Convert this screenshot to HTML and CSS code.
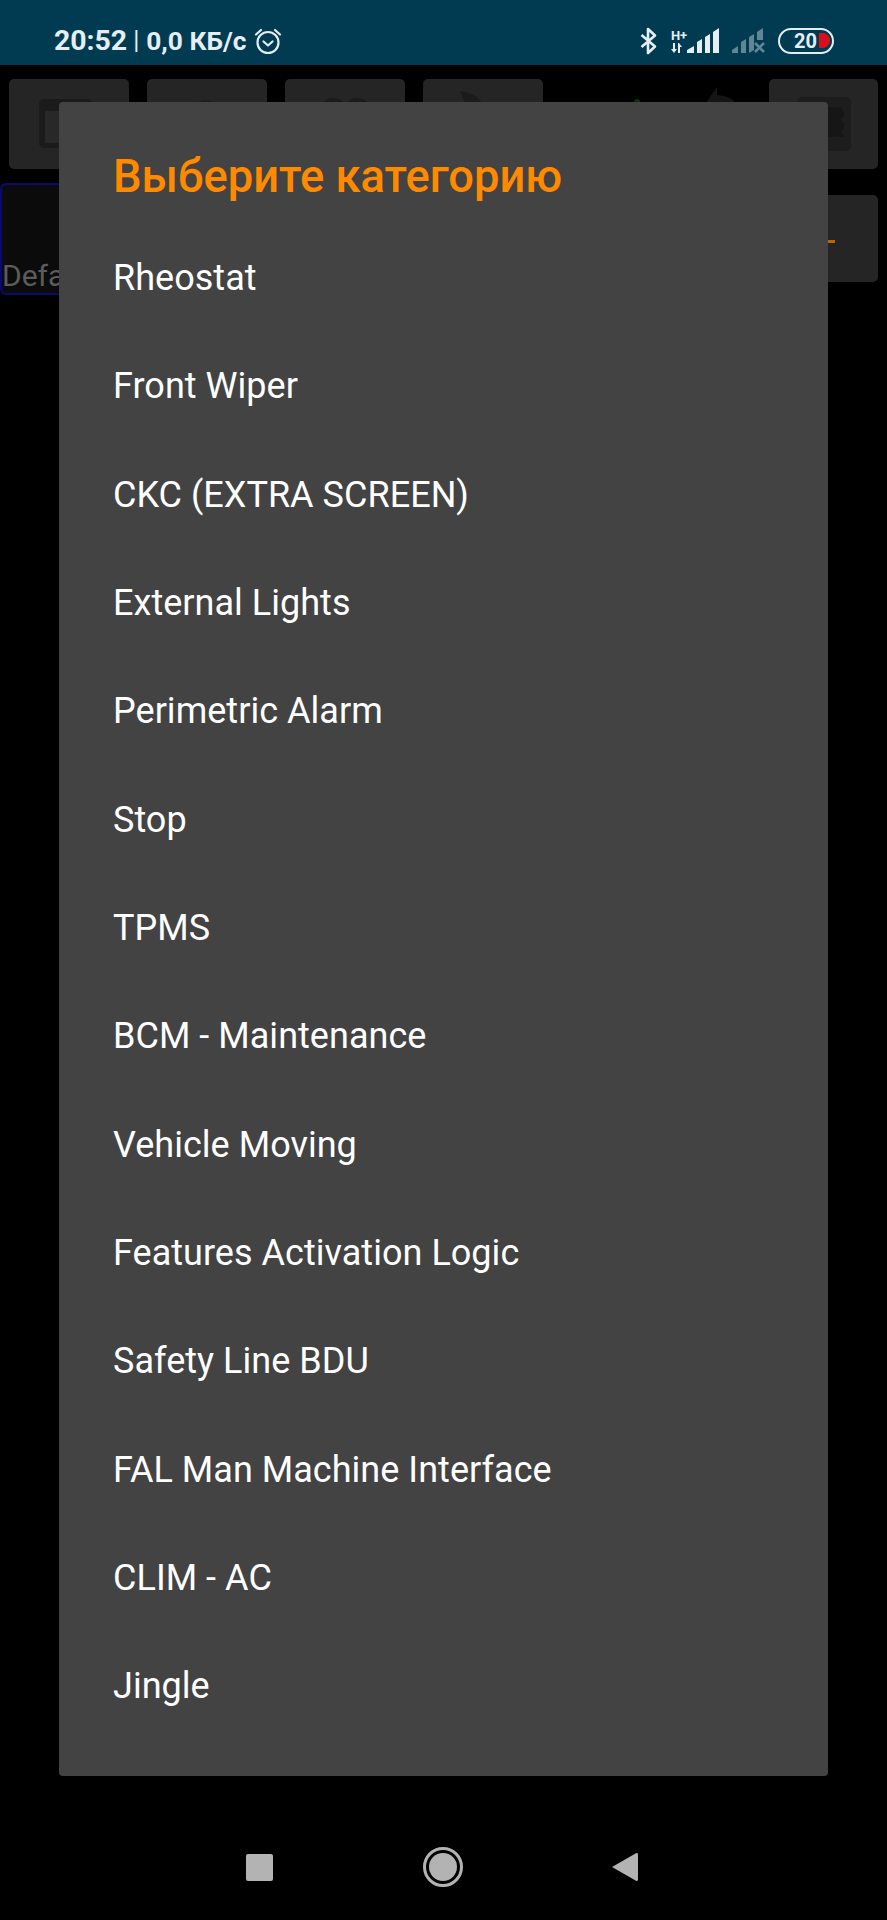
FILE: index.html
```html
<!DOCTYPE html>
<html lang="en">
<head>
    <meta charset="UTF-8">
    <meta name="viewport" content="width=device-width, initial-scale=1.0">
    <title>Выберите категорию</title>
    <link rel="stylesheet" href="styles.css">
</head>
<body>
    <header class="status-bar">
        <div class="status-left">
            <span class="clock">20:52</span>
            <span class="divider">|</span>
            <span class="speed">0,0 КБ/с</span>
            <svg class="alarm" width="28" height="28" viewBox="0 0 28 28" fill="none" stroke="#e4eef3" stroke-width="2.2" stroke-linecap="round" stroke-linejoin="round">
                <circle cx="14" cy="15.5" r="10.5"/>
                <path d="M9.5 14.5l4.5 4 4.5-4"/>
                <path d="M2 7.5L7 3M26 7.5L21 3"/>
            </svg>
        </div>
        <div class="status-right">
            <svg class="bluetooth" width="18" height="28" viewBox="0 0 18 28" fill="none" stroke="#e4eef3" stroke-width="2.6" stroke-linejoin="round">
                <path d="M1.5 8L15 19.5 8 26V2l7 6.5L1.5 20"/>
            </svg>
            <div class="sim sim-main">
                <div class="net">
                    <span class="net-type">H+</span>
                    <svg width="14" height="10" viewBox="0 0 14 10" fill="#e4eef3">
                        <path d="M3 0h2v6h2L4 10 1 6h2zM9 0l3 4h-2v6H8V0z"/>
                    </svg>
                </div>
                <svg width="36" height="25" viewBox="0 0 36 25" fill="#e4eef3">
                    <path d="M0 25v-3l7-4v7zM10 25V14l5-3v14zM18 25V9l5-3v19zM26 25V4l6-4v25z"/>
                </svg>
            </div>
            <svg class="sim-off" width="34" height="25" viewBox="0 0 34 25" fill="#e4eef3" opacity="0.42">
                <path d="M0 25v-3l6-4v7zM9 25V14l5-3v14zM17 25V9l5-3v16zM25 12V4l6-4v12z"/>
                <path d="M23 15l9 9M32 15l-9 9" stroke="#e4eef3" stroke-width="2.6" fill="none"/>
            </svg>
            <div class="battery">
                <span class="battery-level">20</span>
                <span class="battery-fill"></span>
            </div>
        </div>
    </header>

    <main class="screen">
        <div class="toolbar">
            <div class="tile">
                <svg width="120" height="90" viewBox="0 0 120 90">
                    <rect x="30" y="20" width="54" height="49" rx="5" fill="#1b1b1b"/>
                    <rect x="36" y="32" width="40" height="32" fill="#282828"/>
                </svg>
            </div>
            <div class="tile">
                <svg width="120" height="90" viewBox="0 0 120 90">
                    <circle cx="58" cy="34" r="13" fill="#1b1b1b"/>
                </svg>
            </div>
            <div class="tile">
                <svg width="120" height="90" viewBox="0 0 120 90">
                    <circle cx="48" cy="34" r="15" fill="#1b1b1b"/>
                    <circle cx="72" cy="34" r="15" fill="#1b1b1b"/>
                </svg>
            </div>
            <div class="tile">
                <svg width="120" height="90" viewBox="0 0 120 90">
                    <path d="M37 12Q56 14 62 30L50 42z" fill="#1b1b1b"/>
                </svg>
            </div>
            <div class="tool-spacer">
                <svg width="190" height="20" viewBox="0 0 190 20">
                    <circle cx="76" cy="15" r="3" fill="#0e2e10"/>
                    <path d="M156 0V8Q170 9 176 17H144z" fill="#151515"/>
                </svg>
            </div>
            <div class="tile tile-last">
                <svg width="109" height="90" viewBox="0 0 109 90">
                    <rect x="28" y="18" width="54" height="54" rx="5" fill="#1d1d1d"/>
                    <path d="M50 28H72L76 35 72 41 76 46 72 53 76 58H50z" fill="#161616"/>
                </svg>
            </div>
        </div>
        <div class="tabs">
            <div class="tab-active">Default</div>
            <div class="tab-action"><span class="tab-dash"></span></div>
        </div>

        <section class="dialog">
            <h2 class="dialog-title">Выберите категорию</h2>
            <ul class="category-list">
                <li>Rheostat</li>
                <li>Front Wiper</li>
                <li>CKC (EXTRA SCREEN)</li>
                <li>External Lights</li>
                <li>Perimetric Alarm</li>
                <li>Stop</li>
                <li>TPMS</li>
                <li>BCM - Maintenance</li>
                <li>Vehicle Moving</li>
                <li>Features Activation Logic</li>
                <li>Safety Line BDU</li>
                <li>FAL Man Machine Interface</li>
                <li>CLIM - AC</li>
                <li>Jingle</li>
            </ul>
        </section>
    </main>

    <nav class="nav-bar">
        <svg width="27" height="27" viewBox="0 0 27 27" fill="#b3b3b3">
            <rect width="27" height="27" rx="2"/>
        </svg>
        <svg width="40" height="40" viewBox="0 0 40 40" fill="#b3b3b3">
            <circle cx="20" cy="20" r="14"/>
            <circle cx="20" cy="20" r="18.5" fill="none" stroke="#b3b3b3" stroke-width="3"/>
        </svg>
        <svg width="26" height="30" viewBox="0 0 26 30" fill="#b3b3b3">
            <path d="M0 15L24 1.2Q26 .5 26 2.5V27.5Q26 29.5 24 28.8z"/>
        </svg>
    </nav>
</body>
</html>
```

FILE: styles.css
```css
* {
    box-sizing: border-box;
}
body {
    display: flex;
    flex-direction: column;
    height: 100vh;
    margin: 0;
    background-color: #000;
    font-family: Roboto, "Noto Sans", sans-serif;
    overflow: hidden;
}

/* status bar */
.status-bar {
    display: flex;
    justify-content: space-between;
    align-items: center;
    flex: none;
    height: 65px;
    padding: 16px 53px 0 54px;
    background-color: #003b52;
    color: #e4eef3;
}
.status-left {
    display: flex;
    align-items: center;
    font-size: 28.4px;
    font-weight: 700;
    white-space: nowrap;
}
.divider {
    margin: 0 7px 0 6px;
    font-size: 25px;
    font-weight: 400;
}
.speed {
    font-size: 26.3px;
}
.alarm {
    margin-left: 8px;
}
.status-right {
    display: flex;
    align-items: center;
}
.bluetooth {
    margin-right: 9px;
}
.sim {
    display: flex;
    align-items: flex-end;
}
.net {
    display: flex;
    flex-direction: column;
    align-items: center;
    width: 20px;
}
.net-type {
    font-size: 13px;
    font-weight: 700;
    line-height: 14px;
    margin-left: 4px;
}
.sim-off {
    margin-left: 9px;
}
.battery {
    display: flex;
    justify-content: flex-end;
    align-items: center;
    width: 56px;
    height: 26px;
    margin-left: 12px;
    padding-right: 2px;
    border: 2.5px solid #e4eef3;
    border-radius: 13px;
    font-size: 20px;
    font-weight: 700;
}
.battery-fill {
    flex: none;
    width: 11px;
    height: 15px;
    margin-left: 2px;
    background-color: #d8101c;
    border-radius: 0 8px 8px 0;
}

/* dimmed page behind the dialog */
.screen {
    position: relative;
    flex: 1;
}
.toolbar {
    display: flex;
    gap: 18px;
    padding: 14px 9px 0;
}
.tile {
    flex: none;
    width: 120px;
    height: 90px;
    background-color: #252525;
    border-radius: 5px;
    overflow: hidden;
}
.tile-last {
    width: 109px;
}
.tool-spacer {
    flex: 1;
    padding-top: 8px;
}
.tabs {
    display: flex;
    justify-content: space-between;
    align-items: flex-start;
    margin-top: 14px;
    padding-right: 9px;
}
.tab-active {
    display: flex;
    align-items: flex-end;
    width: 120px;
    height: 112px;
    background-color: #0b0b0b;
    border: 2px solid #0a0a6e;
    border-radius: 6px;
    color: #5c5c5c;
    font-size: 30px;
    overflow: hidden;
}
.tab-action {
    position: relative;
    width: 109px;
    height: 87px;
    margin-top: 12px;
    background-color: #252525;
    border-radius: 5px;
}
.tab-dash {
    position: absolute;
    right: 43px;
    top: 45px;
    width: 8px;
    height: 3px;
    background-color: #b86a00;
}

/* dialog */
.dialog {
    position: absolute;
    top: 37px;
    left: 59px;
    width: 769px;
    height: 1674px;
    padding: 0 54px;
    background-color: #434343;
    border-radius: 4px;
}
.dialog-title {
    margin: 51px 0 0;
    color: #ff8a00;
    font-size: 45.3px;
    font-weight: 500;
    line-height: 47px;
}
.category-list {
    margin: 24px 0 0;
    padding: 0;
    list-style: none;
}
.category-list li {
    height: 108.35px;
    color: #fff;
    font-size: 36px;
    letter-spacing: 0.03px;
    line-height: 108px;
    white-space: nowrap;
}

/* navigation */
.nav-bar {
    display: flex;
    justify-content: space-between;
    align-items: center;
    flex: none;
    height: 106px;
    padding: 0 249px 0 246px;
}
```
